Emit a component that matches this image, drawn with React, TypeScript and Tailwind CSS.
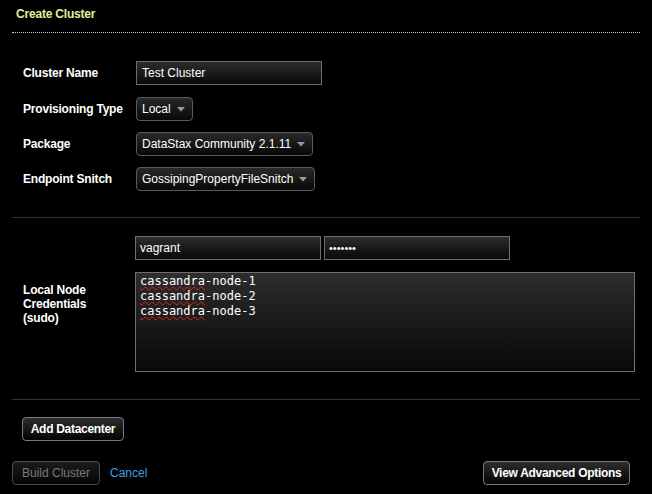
import React from "react";

const field =
  "h-[24px] border border-[#6e6e6e] bg-linear-to-b from-[#2d2d2d] to-[#090909] text-white text-[12px] flex items-center";
const select =
  "h-[24px] rounded-[4px] border border-[#5a5a5a] bg-linear-to-b from-[#2a2a2a] to-[#080808] text-white text-[12px] flex items-center pl-[5px] pr-[7px] gap-[6px]";
const button =
  "h-[24px] rounded-[4px] border border-[#7a7a7a] bg-linear-to-b from-[#2e2e2e] to-[#050505] text-[12px] font-bold tracking-[-0.3px] text-white flex items-center justify-center";

function Caret() {
  return (
    <svg width="8" height="5" viewBox="0 0 8 5" className="shrink-0">
      <path d="M0 0 L8 0 L4 4.5 Z" fill="#9a9a9a" />
    </svg>
  );
}

function Row({ label, tall, children }: { label: string; tall?: boolean; children: React.ReactNode }) {
  return (
    <div className={`flex items-start ${tall ? "h-[25px]" : "h-[24px]"}`}>
      <div className="w-[113px] h-[24px] flex items-center font-bold tracking-[-0.2px] text-white text-[12px]">
        {label}
      </div>
      {children}
    </div>
  );
}

const nodes = ["cassandra-node-1", "cassandra-node-2", "cassandra-node-3"];

export default function App() {
  return (
    <div className="w-[652px] h-[494px] bg-black font-['Liberation_Sans',Arial,sans-serif] text-[12px] overflow-hidden">
      {/* Header */}
      <div className="mx-[12px] pt-[7px] h-[33px] border-b border-dotted border-[#cfcfcf]">
        <div className="pl-[4px] leading-[15px] font-bold tracking-[-0.2px] text-[#e6ee99]">Create Cluster</div>
      </div>

      {/* Basic settings */}
      <div className="mx-[12px] px-[11px] pt-[28px] pb-[26px] border-b border-[#333] flex flex-col gap-[11px]">
        <Row label="Cluster Name" tall>
          <div className={`${field} w-[186px] pl-[5px]`}>Test Cluster</div>
        </Row>
        <Row label="Provisioning Type">
          <div className={select}>
            <span>Local</span>
            <Caret />
          </div>
        </Row>
        <Row label="Package">
          <div className={select}>
            <span>DataStax Community 2.1.11</span>
            <Caret />
          </div>
        </Row>
        <Row label="Endpoint Snitch">
          <div className={select}>
            <span>GossipingPropertyFileSnitch</span>
            <Caret />
          </div>
        </Row>
      </div>

      {/* Credentials */}
      <div className="mx-[12px] pl-[11px] pt-[18px] pb-[27px] border-b border-[#333] flex items-center">
        <div className="w-[112px] font-bold tracking-[-0.2px] text-white leading-[14px]">
          Local Node
          <br />
          Credentials
          <br />
          (sudo)
        </div>
        <div className="flex flex-col gap-[12px]">
          <div className="flex gap-[3px]">
            <div className={`${field} w-[186px] pl-[4px]`}>vagrant</div>
            <div className={`${field} w-[186px] pl-[4px]`}>
              <span className="text-[11px] leading-none">•••••••</span>
            </div>
          </div>
          <div className="w-[500px] h-[100px] border border-[#6e6e6e] bg-linear-to-b from-[#2d2d2d] to-[#090909] pl-[4px] pt-[1px] font-['DejaVu_Sans_Mono',monospace] text-[12px] leading-[15px] text-white">
            {nodes.map((n) => (
              <div key={n}>
                <span className="underline decoration-wavy decoration-[#e02020] decoration-1 underline-offset-[1px]">
                  cassandra
                </span>
                {n.slice(9)}
              </div>
            ))}
          </div>
        </div>
      </div>

      {/* Actions */}
      <div className="mx-[12px] pt-[17px]">
        <div className="pl-[10px]">
          <button className={`${button} w-[102px]`}>Add Datacenter</button>
        </div>
        <div className="mt-[20px] flex items-center justify-between pr-[10px]">
          <div className="flex items-center gap-[10px]">
            <button className="h-[24px] w-[88px] rounded-[4px] border border-[#4a4a4a] bg-linear-to-b from-[#1c1c1c] to-[#050505] text-[12px] text-[#7a7a7a] flex items-center justify-center">
              Build Cluster
            </button>
            <span className="text-[#3d9fe6]">Cancel</span>
          </div>
          <button className={`${button} w-[147px]`}>View Advanced Options</button>
        </div>
      </div>
    </div>
  );
}
